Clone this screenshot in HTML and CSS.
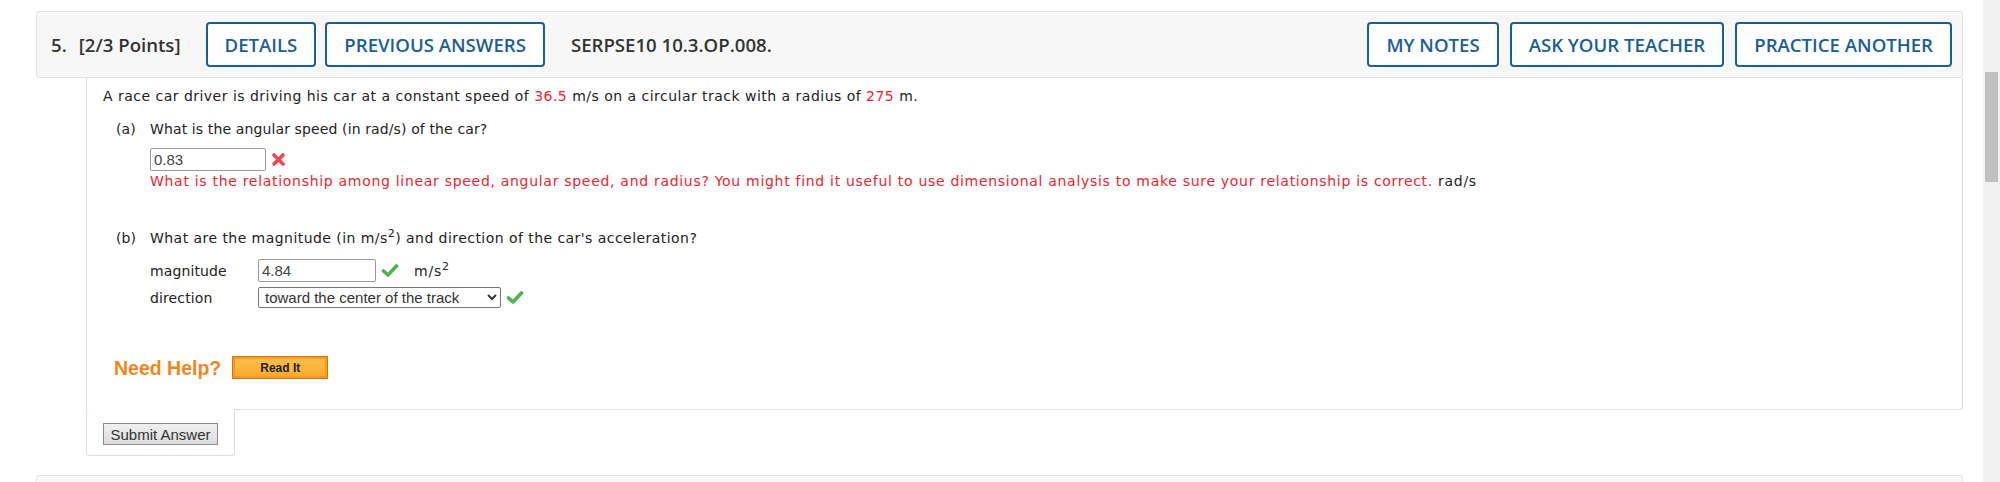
FILE: index.html
```html
<!DOCTYPE html>
<html lang="en">
<head>
    <meta charset="UTF-8">
    <title>SERPSE10 10.3.OP.008.</title>
    <link rel="stylesheet" href="styles.css">
</head>
<body>
    <div class="page">
        <div class="main">
            <div class="question">
                <div class="q-header">
                    <span class="q-num">5.</span>
                    <span class="q-points">[2/3 Points]</span>
                    <button class="hdr-btn">DETAILS</button>
                    <button class="hdr-btn">PREVIOUS ANSWERS</button>
                    <span class="q-ref">SERPSE10 10.3.OP.008.</span>
                    <div class="hdr-right">
                        <button class="hdr-btn">MY NOTES</button>
                        <button class="hdr-btn">ASK YOUR TEACHER</button>
                        <button class="hdr-btn">PRACTICE ANOTHER</button>
                    </div>
                </div>

                <div class="q-body">
                    <p class="q-stem">A race car driver is driving his car at a constant speed of <span class="red">36.5</span> m/s on a circular track with a radius of <span class="red">275</span> m.</p>

                    <div class="part part-a">
                        <span class="part-label">(a)</span>
                        <div class="part-content">
                            <p class="part-text">What is the angular speed (in rad/s) of the car?</p>
                            <div class="answer-row">
                                <input class="answer" type="text" value="0.83">
                                <svg class="mark" width="15" height="15" viewBox="0 0 15 15"><path d="M3 3 L12 12 M12 3 L3 12" stroke="#ee4652" stroke-width="3.6" stroke-linecap="round"/></svg>
                            </div>
                            <p class="feedback"><span class="red">What is the relationship among linear speed, angular speed, and radius? You might find it useful to use dimensional analysis to make sure your relationship is correct.</span> rad/s</p>
                        </div>
                    </div>

                    <div class="part part-b">
                        <span class="part-label">(b)</span>
                        <div class="part-content">
                            <p class="part-text">What are the magnitude (in m/s<sup>2</sup>) and direction of the car's acceleration?</p>
                            <div class="field-grid">
                                <span>magnitude</span>
                                <div class="answer-row">
                                    <input class="answer answer-mag" type="text" value="4.84">
                                    <svg class="mark" width="18" height="15" viewBox="0 0 18 15"><path d="M2.5 8 L7 12 L15.5 3" fill="none" stroke="#52b152" stroke-width="3.6" stroke-linecap="round" stroke-linejoin="round"/></svg>
                                    <span class="unit">m/s<sup>2</sup></span>
                                </div>
                                <span>direction</span>
                                <div class="answer-row">
                                    <select class="answer-select">
                                        <option>toward the center of the track</option>
                                    </select>
                                    <svg class="mark" width="18" height="15" viewBox="0 0 18 15"><path d="M2.5 8 L7 12 L15.5 3" fill="none" stroke="#52b152" stroke-width="3.6" stroke-linecap="round" stroke-linejoin="round"/></svg>
                                </div>
                            </div>
                        </div>
                    </div>

                    <div class="need-help">
                        <span class="need-help-label">Need Help?</span>
                        <button class="read-it">Read It</button>
                    </div>
                </div>

                <div class="submit-tab">
                    <button class="submit-btn">Submit Answer</button>
                </div>
            </div>

            <div class="next-question"></div>
        </div>

        <div class="scrollbar"><div class="scroll-thumb"></div></div>
    </div>
</body>
</html>
```

FILE: styles.css
```css
html, body {
    margin: 0;
    height: 100%;
    overflow: hidden;
}

body {
    font-family: "DejaVu Sans", Verdana, sans-serif;
    font-size: 14px;
    letter-spacing: 0.12px;
    color: #222;
    background-color: #fff;
}

p {
    margin: 0;
}

.page {
    display: flex;
    height: 100%;
}

.main {
    flex: 1;
    padding: 11px 20px 0 36px;
}

/* header bar */
.q-header {
    display: flex;
    align-items: center;
    height: 65px;
    padding: 0 10px 0 14px;
    background-color: #f7f7f7;
    border: 1px solid #e2e2e2;
    border-radius: 3px;
    font-family: "Open Sans", sans-serif;
    font-weight: 600;
    font-size: 18.6px;
    letter-spacing: 0;
    color: #333;
}

.q-num {
    margin-right: 12px;
}

.q-points {
    margin-right: 25px;
}

.hdr-btn {
    height: 45px;
    padding: 0 17px;
    margin-right: 9px;
    font-family: "Open Sans", sans-serif;
    font-weight: 600;
    font-size: 18.6px;
    color: #1c5e93;
    background-color: #fff;
    border: 2px solid #1c5e93;
    border-radius: 4px;
}

.q-ref {
    margin-left: 17px;
}

.hdr-right {
    display: flex;
    margin-left: auto;
}

.hdr-right .hdr-btn {
    margin: 0 0 0 11px;
}

/* question body */
.q-body {
    margin-left: 50px;
    padding: 10px 16px 30px 16px;
    border: 1px solid #dedede;
    border-top: none;
    border-radius: 0 0 4px 4px;
    line-height: 16px;
}

.q-stem {
    letter-spacing: 0.48px;
}

.red {
    color: #e8262e;
}

.part {
    display: flex;
}

.part-a {
    margin-top: 17px;
}

.part-b {
    margin-top: 41px;
}

.part-b .part-text {
    letter-spacing: 0.45px;
}

.part-label {
    width: 34px;
    padding-left: 13px;
}

sup {
    font-size: 11px;
    line-height: 0;
}

.answer-row {
    display: flex;
    align-items: center;
}

.part-a .answer-row {
    margin-top: 11px;
}

.answer {
    box-sizing: border-box;
    width: 116px;
    height: 23px;
    padding: 1px 3px;
    font-family: "Liberation Sans", Arial, sans-serif;
    font-size: 15px;
    letter-spacing: 0;
    color: #444;
    border: 1px solid #999;
    border-radius: 2px;
}

.answer-mag {
    width: 118px;
}

.mark {
    margin-left: 5px;
}

.unit {
    margin-left: 15px;
    letter-spacing: 0.8px;
}

.feedback {
    margin-top: 2px;
    letter-spacing: 0.7px;
}

.field-grid {
    display: grid;
    grid-template-columns: 108px auto;
    row-gap: 5px;
    align-items: center;
    margin-top: 13px;
}

.answer-select {
    box-sizing: border-box;
    width: 243px;
    height: 21px;
    padding: 0 2px;
    font-family: "Liberation Sans", Arial, sans-serif;
    font-size: 15px;
    letter-spacing: 0;
    color: #333;
    border: 1px solid #767676;
    border-radius: 2px;
    background-color: #fff;
}

.need-help {
    display: flex;
    align-items: center;
    margin-top: 48px;
    padding-left: 11px;
}

.need-help-label {
    font-family: "Liberation Sans", Arial, sans-serif;
    font-weight: bold;
    font-size: 19.5px;
    letter-spacing: 0;
    color: #f0861e;
    margin-right: 11px;
}

.read-it {
    width: 96px;
    height: 23px;
    padding: 0;
    font-family: "Liberation Sans", Arial, sans-serif;
    font-weight: bold;
    font-size: 12px;
    color: #222;
    background: linear-gradient(#fcc04e, #f9a92c);
    border: 1px solid #d9740c;
    box-shadow: inset 0 0 0 2px #f79a22;
}

/* submit tab below body */
.submit-tab {
    position: relative;
    width: 115px;
    margin: -1px 0 0 50px;
    padding: 14px 16px 10px 16px;
    background-color: #fff;
    border: 1px solid #dedede;
    border-top: none;
    border-radius: 0 0 4px 4px;
}

.submit-btn {
    display: block;
    width: 115px;
    height: 22px;
    padding: 0;
    font-family: "Liberation Sans", Arial, sans-serif;
    font-size: 15px;
    letter-spacing: 0;
    color: #333;
    background: linear-gradient(#f0f0f0, #dcdcdc);
    border: 1px solid #8a8a8a;
}

.next-question {
    height: 40px;
    margin-top: 19px;
    background-color: #f7f7f7;
    border: 1px solid #e6e6e6;
    border-radius: 3px;
}

/* fake browser scrollbar */
.scrollbar {
    width: 17px;
    background-color: #f1f1f1;
}

.scroll-thumb {
    width: 13px;
    height: 110px;
    margin: 72px 0 0 2px;
    background-color: #c1c1c1;
}
```
